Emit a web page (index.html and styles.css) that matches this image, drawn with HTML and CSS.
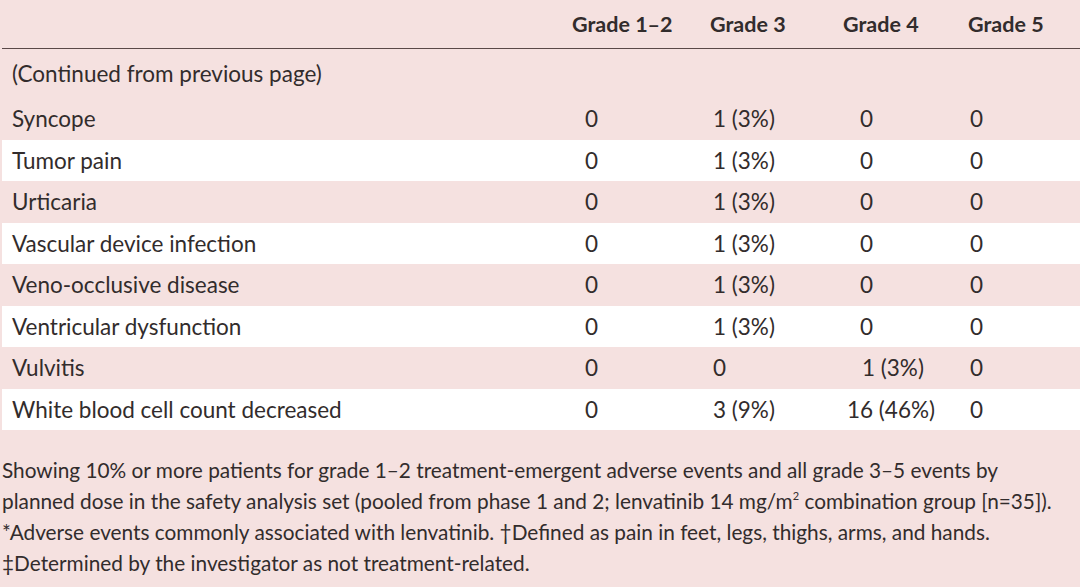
FILE: index.html
```html
<!DOCTYPE html>
<html>
<head>
<meta charset="utf-8">
<link rel="stylesheet" href="styles.css">
</head>
<body>
<div class="page">
  <div class="row head">
    <div class="cell"></div>
    <div class="cell h1">Grade 1–2</div>
    <div class="cell h2">Grade 3</div>
    <div class="cell h3">Grade 4</div>
    <div class="cell h4">Grade 5</div>
  </div>
  <div class="row cont">
    <div class="cell label">(Continued from previous page)</div>
  </div>
  <div class="row pink">
    <div class="cell label">Syncope</div>
    <div class="cell c1">0</div><div class="cell c2">1 (3%)</div><div class="cell c3">0</div><div class="cell c4">0</div>
  </div>
  <div class="row white">
    <div class="cell label">Tumor pain</div>
    <div class="cell c1">0</div><div class="cell c2">1 (3%)</div><div class="cell c3">0</div><div class="cell c4">0</div>
  </div>
  <div class="row pink">
    <div class="cell label">Urticaria</div>
    <div class="cell c1">0</div><div class="cell c2">1 (3%)</div><div class="cell c3">0</div><div class="cell c4">0</div>
  </div>
  <div class="row white">
    <div class="cell label">Vascular device infection</div>
    <div class="cell c1">0</div><div class="cell c2">1 (3%)</div><div class="cell c3">0</div><div class="cell c4">0</div>
  </div>
  <div class="row pink">
    <div class="cell label">Veno-occlusive disease</div>
    <div class="cell c1">0</div><div class="cell c2">1 (3%)</div><div class="cell c3">0</div><div class="cell c4">0</div>
  </div>
  <div class="row white">
    <div class="cell label">Ventricular dysfunction</div>
    <div class="cell c1">0</div><div class="cell c2">1 (3%)</div><div class="cell c3">0</div><div class="cell c4">0</div>
  </div>
  <div class="row pink">
    <div class="cell label">Vulvitis</div>
    <div class="cell c1">0</div><div class="cell c2">0</div><div class="cell c3 c3b">1 (3%)</div><div class="cell c4">0</div>
  </div>
  <div class="row white">
    <div class="cell label">White blood cell count decreased</div>
    <div class="cell c1">0</div><div class="cell c2">3 (9%)</div><div class="cell c3 c3c">16 (46%)</div><div class="cell c4">0</div>
  </div>
  <p class="note">Showing 10% or more patients for grade 1–2 treatment-emergent adverse events and all grade 3–5 events by<br>planned dose in the safety analysis set (pooled from phase 1 and 2; lenvatinib 14 mg/m<sup>2</sup> combination group [n=35]).<br>*Adverse events commonly associated with lenvatinib. †Defined as pain in feet, legs, thighs, arms, and hands.<br>‡Determined by the investigator as not treatment-related.</p>
</div>
</body>
</html>
```
FILE: styles.css
```css
html, body {
  margin: 0;
  padding: 0;
  background: #f5e1e0;
}
.page {
  width: 1080px;
  height: 587px;
  background: #f5e1e0;
  font-family: Lato, "Open Sans", sans-serif;
  color: #322c2c;
  font-size: 22.5px;
  overflow: hidden;
}
.row {
  display: grid;
  grid-template-columns: 560px 140px 135px 125px 1fr;
  align-items: center;
  margin-left: 2px;
  height: 41.5px;
}
.row.head {
  height: 48px;
  border-bottom: 1.5px solid #5a4848;
  font-weight: 700;
  font-size: 21.5px;
}
.row.cont {
  height: 49px;
}
.row.white {
  background: #ffffff;
}
.cell {
  white-space: nowrap;
}
.label { padding-left: 10px; }
.h1 { padding-left: 10px; }
.h2 { padding-left: 8px; }
.h3 { padding-left: 6px; }
.h4 { padding-left: 6px; }
.c1 { padding-left: 23px; }
.c2 { padding-left: 11px; }
.c3 { padding-left: 23px; }
.c3b { padding-left: 25px; }
.c3c { padding-left: 10px; }
.c4 { padding-left: 8px; }
.note {
  margin: 24px 0 0 2px;
  font-size: 20.8px;
  line-height: 31px;
  white-space: nowrap;
}
.note sup {
  font-size: 11px;
  line-height: 0;
  vertical-align: 9px;
}
```
